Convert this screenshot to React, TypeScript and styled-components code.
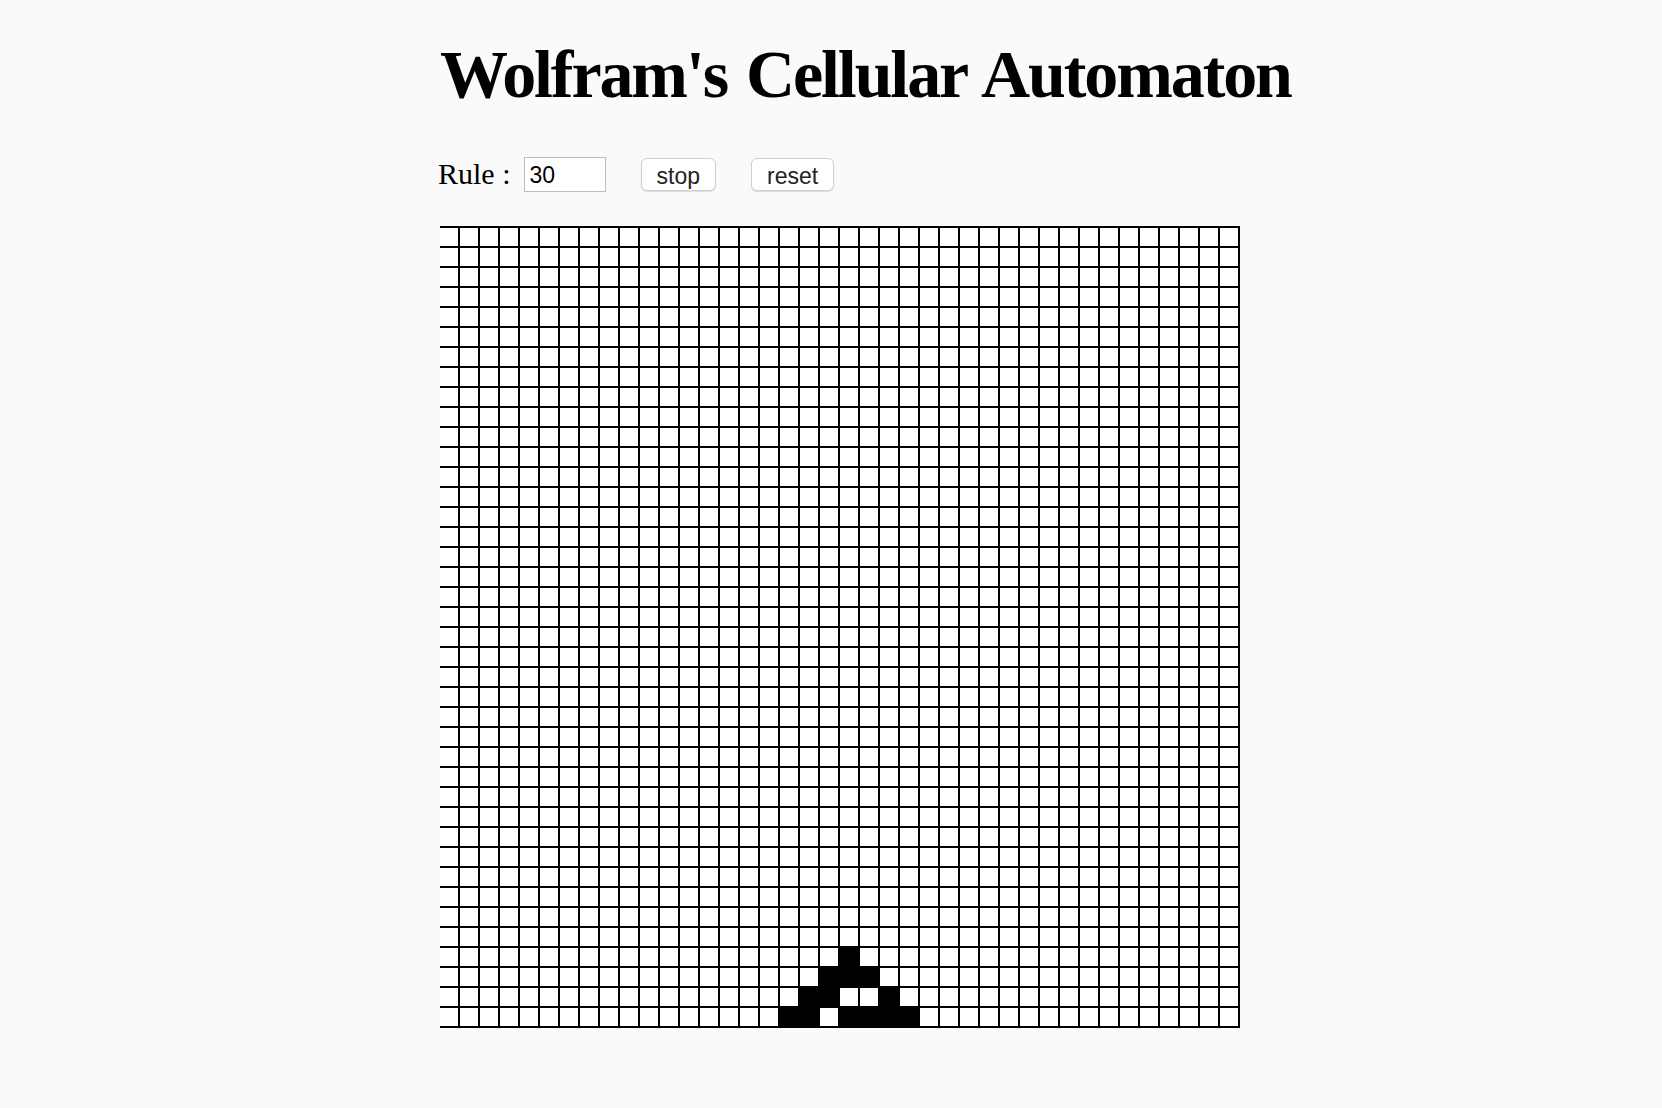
import { useState } from "react";
import styled, { createGlobalStyle } from "styled-components";

const SIZE = 40;
const START_ROW = 36;

const GlobalStyle = createGlobalStyle`
  html, body {
    margin: 0;
    padding: 0;
    background: #fafafa;
  }
`;

function nextGen(row: number[], rule: number) {
  return row.map((_, i) => {
    const l = row[i - 1] ?? 0;
    const c = row[i];
    const r = row[i + 1] ?? 0;
    const idx = (l << 2) | (c << 1) | r;
    return (rule >> idx) & 1;
  });
}

function buildGrid(rule: number) {
  const grid: number[][] = Array.from({ length: SIZE }, () =>
    Array(SIZE).fill(0),
  );
  let row = Array(SIZE).fill(0);
  row[20] = 1;
  for (let r = START_ROW; r < SIZE; r++) {
    grid[r] = row;
    row = nextGen(row, rule);
  }
  return grid;
}

export default function App() {
  const [rule, setRule] = useState("30");
  const [running, setRunning] = useState(true);
  const grid = buildGrid(Number(rule) || 0);

  return (
    <>
      <GlobalStyle />
      <Page>
        <Title>Wolfram's Cellular Automaton</Title>
        <Controls>
          <Label>Rule :</Label>
          <RuleInput value={rule} onChange={(e) => setRule(e.target.value)} />
          <Button onClick={() => setRunning(!running)}>
            {running ? "stop" : "start"}
          </Button>
          <Button onClick={() => setRule("30")}>reset</Button>
        </Controls>
        <Board>
          {grid.map((row, y) =>
            row.map((cell, x) => <Cell key={`${y}-${x}`} $alive={cell === 1} />),
          )}
        </Board>
      </Page>
    </>
  );
}

const Page = styled.div`
  padding: 40px 0 60px 440px;
`;

const Title = styled.h1`
  margin: 0;
  font-family: "Liberation Serif", "Times New Roman", serif;
  font-weight: bold;
  font-size: 68px;
  line-height: 68px;
  letter-spacing: -2.1px;
  word-spacing: 4px;
  color: #000;
  white-space: nowrap;
`;

const Controls = styled.div`
  display: flex;
  align-items: center;
  margin-top: 49px;
  height: 35px;
`;

const Label = styled.span`
  font-family: "Liberation Serif", "Times New Roman", serif;
  font-size: 30px;
  line-height: 30px;
  color: #000;
  margin: -2px 13px 0 -2px;
`;

const RuleInput = styled.input`
  box-sizing: border-box;
  width: 82px;
  height: 35px;
  padding: 2px 5px 0;
  border: 1px solid #bdbdbd;
  background: #fff;
  font-family: "Liberation Sans", Arial, sans-serif;
  font-size: 23px;
  color: #000;
  outline: none;
  margin-right: 35px;
`;

const Button = styled.button`
  box-sizing: border-box;
  height: 33px;
  padding: 3px 15px 0;
  margin-right: 35px;
  background: #fff;
  border: 1px solid #cfcfcf;
  border-radius: 6px;
  box-shadow: 0 1px 1px rgba(0, 0, 0, 0.12);
  font-family: "Liberation Sans", Arial, sans-serif;
  font-size: 23px;
  color: #222;
  cursor: pointer;
`;

const Board = styled.div`
  display: grid;
  grid-template-columns: repeat(${SIZE}, 18px);
  grid-auto-rows: 18px;
  gap: 2px;
  padding: 2px 2px 2px 0;
  width: max-content;
  margin-top: 34px;
  background: #000;
`;

const Cell = styled.div<{ $alive: boolean }>`
  background: ${(p) => (p.$alive ? "#000" : "#fff")};
`;
